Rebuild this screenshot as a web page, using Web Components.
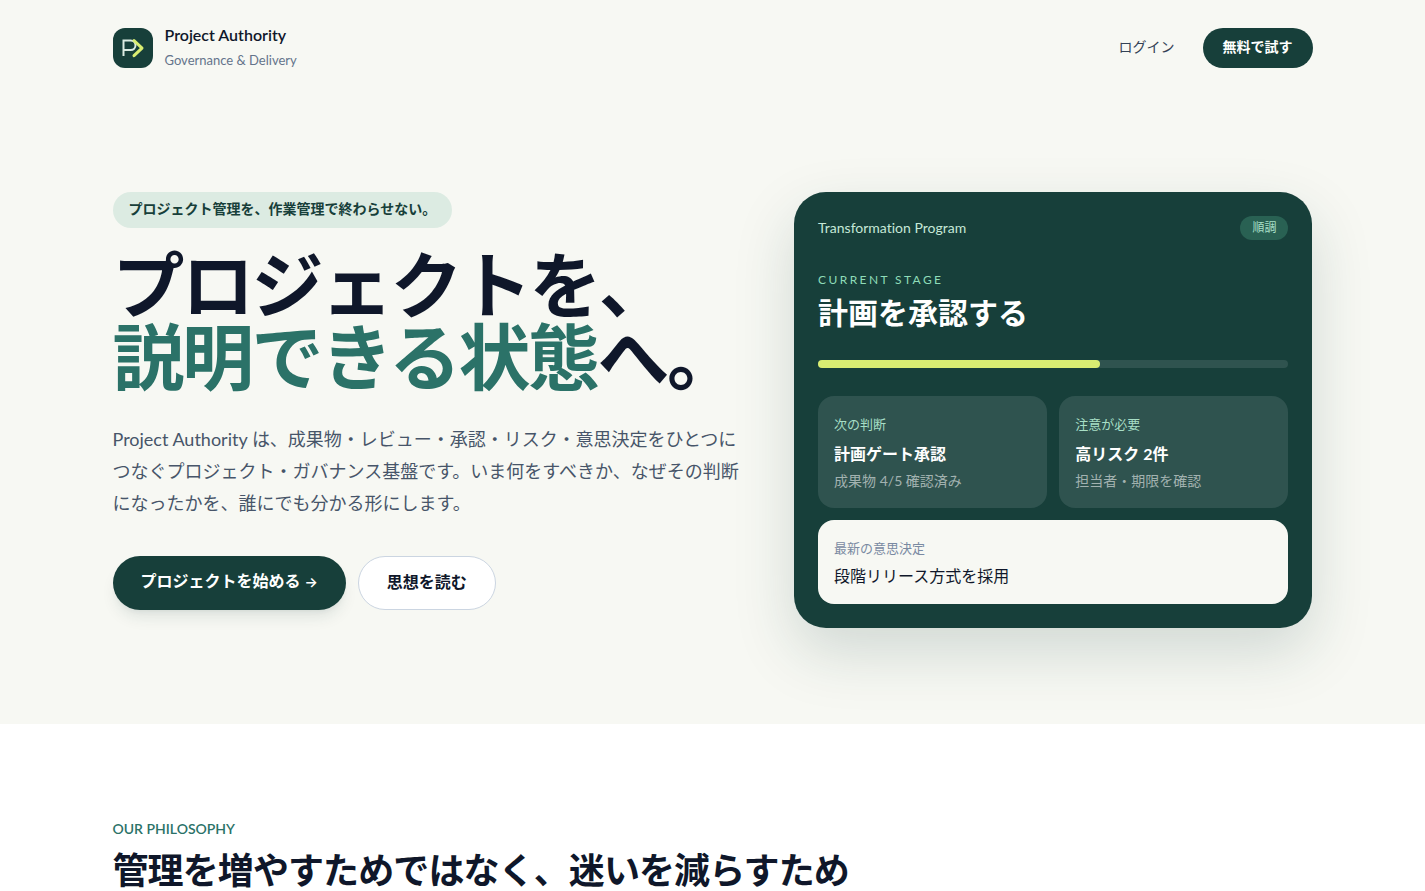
<!DOCTYPE html>
<html lang="ja">
<head>
<meta charset="utf-8">
<meta name="viewport" content="width=device-width, initial-scale=1">
<title>Project Authority</title>
<style>
  body {
    margin: 0;
    background: #fff;
    color: #0f172a;
    font-family: "Lato", "Noto Sans CJK JP", sans-serif;
    font-size: 16px;
    line-height: 24px;
    font-variant-ligatures: none;
  }
</style>
</head>
<body>
<pa-page></pa-page>
<script>
const define = (name, html) => {
  const template = document.createElement('template');
  template.innerHTML = html;
  customElements.define(name, class extends HTMLElement {
    constructor() {
      super();
      this.attachShadow({ mode: 'open' }).append(template.content.cloneNode(true));
    }
  });
};

define('pa-logo', `
  <style>
    :host { display: block; }
    a { display: flex; align-items: center; gap: 12px; color: inherit; text-decoration: none; }
    svg { display: block; width: 40px; height: 40px; flex: none; }
    strong, small { display: block; }
    strong { font-size: 16px; line-height: 24px; font-weight: 600; }
    small { font-size: 13px; line-height: 26px; color: #64748b; }
  </style>
  <a href="#">
    <svg viewBox="0 0 40 40" aria-hidden="true">
      <rect width="40" height="40" rx="12" fill="#173f3a"/>
      <path d="M10.500 28V12.500h7.200a4.800 4.800 0 0 1 0 9.600H10.500" fill="none" stroke="#dcebe2" stroke-width="2"/>
      <path d="M21 12.500l8 7.700-8 7.500" fill="none" stroke="#d9ed72" stroke-width="3" stroke-linecap="round" stroke-linejoin="round"/>
    </svg>
    <span><strong>Project Authority</strong><small>Governance &amp; Delivery</small></span>
  </a>`);

define('pa-header', `
  <style>
    :host { display: flex; justify-content: space-between; align-items: center; height: 96px; }
    nav { display: flex; align-items: center; gap: 28px; font-size: 14px; line-height: 20px; }
    a { color: #334155; text-decoration: none; padding-bottom: 2px; }
    button { font: inherit; font-weight: 700; color: #fff; background: #173f3a; border: 0; border-radius: 20px; padding: 9px 20px 11px; }
  </style>
  <pa-logo></pa-logo>
  <nav><a href="#login">ログイン</a><button type="button">無料で試す</button></nav>`);

define('pa-hero', `
  <style>
    :host { display: grid; grid-template-columns: minmax(0, 11fr) minmax(0, 9fr); gap: 48px; align-items: start; padding: 96px 0; }
    .tag { display: inline-block; background: #dcebe2; color: #173f3a; border-radius: 18px; padding: 7px 16px 9px; font-size: 14px; line-height: 20px; font-weight: 600; vertical-align: top; }
    h1 { margin: 20px 0 0; font-size: 72px; line-height: 72px; font-weight: 600; letter-spacing: -0.035em; }
    em { font-style: normal; color: #2b7268; }
    p { margin: 31px 0 0; font-size: 18px; line-height: 32px; color: #475569; }
    .actions { display: flex; gap: 12px; margin-top: 37px; }
    .arrow { font-family: "Inter", sans-serif; font-size: 14px; line-height: 20px; }
  </style>
  <div>
    <span class="tag">プロジェクト管理を、作業管理で終わらせない。</span>
    <h1>プロジェクトを、<br><em>説明できる状態</em>へ。</h1>
    <p>Project Authority は、成果物・レビュー・承認・リスク・意思決定をひとつにつなぐプロジェクト・ガバナンス基盤です。いま何をすべきか、なぜその判断になったかを、誰にでも分かる形にします。</p>
    <div class="actions">
      <pa-action class="primary">プロジェクトを始める <span class="arrow">→</span></pa-action>
      <pa-action>思想を読む</pa-action>
    </div>
  </div>
  <pa-program></pa-program>`);

define('pa-action', `
  <style>
    :host { display: block; }
    button { font: inherit; font-weight: 600; line-height: 24px; color: #0f172a; background: #fff; border: 1px solid #cbd5e1; border-radius: 27px; padding: 13px 28px 15px; }
    :host(.primary) button { background: #173f3a; color: #fff; border: 0; padding: 13px 28px 17px; box-shadow: 0 10px 15px -3px #173f3a1a, 0 4px 6px -4px #173f3a1a; }
  </style>
  <button type="button"><slot></slot></button>`);

define('pa-tile', `
  <style>
    :host { display: block; box-sizing: border-box; padding: 16px; border-radius: 16px; background: #2f534f; color: #fff; }
    .label { font-size: 13px; line-height: 24px; color: #a7dfc6; }
    .value { font-size: 16px; line-height: 24px; font-weight: 700; margin-top: 6px; }
    .note { font-size: 14px; line-height: 22px; color: #a2b2b0; margin-top: 4px; }
    :host(.light) { background: #f7f8f3; color: #0f172a; }
    :host(.light) .label { color: #7a8aa2; }
    :host(.light) .value { font-weight: 400; margin-top: 4px; }
    :host(.light) .note { display: none; }
  </style>
  <div class="label"><slot name="label"></slot></div>
  <div class="value"><slot></slot></div>
  <div class="note"><slot name="note"></slot></div>`);

define('pa-program', `
  <style>
    :host { display: block; background: #173f3a; border-radius: 32px; padding: 24px; color: #fff; box-shadow: 0 24px 60px #173f3a2b; }
    header { display: flex; justify-content: space-between; align-items: center; font-size: 14px; line-height: 24px; color: #c5e8d7; }
    .state { background: #296153; color: #a7dfc6; border-radius: 12px; padding: 0 12px; font-size: 12px; line-height: 24px; }
    .stage { margin-top: 30px; font-size: 12px; line-height: 20px; letter-spacing: 0.2em; color: #8edcb8; }
    h2 { margin: 4px 0 0; font-size: 30px; line-height: 36px; font-weight: 600; }
    .bar { margin-top: 30px; height: 8px; border-radius: 4px; background: #2f534f; }
    .bar div { width: 60%; height: 8px; border-radius: 4px; background: #d9ed72; }
    .tiles { display: grid; grid-template-columns: 1fr 1fr; gap: 12px; margin-top: 28px; }
    .light { grid-column: 1 / -1; }
  </style>
  <header><span>Transformation Program</span><span class="state">順調</span></header>
  <div class="stage">CURRENT STAGE</div>
  <h2>計画を承認する</h2>
  <div class="bar"><div></div></div>
  <div class="tiles">
    <pa-tile><span slot="label">次の判断</span>計画ゲート承認<span slot="note">成果物 4/5 確認済み</span></pa-tile>
    <pa-tile><span slot="label">注意が必要</span>高リスク 2件<span slot="note">担当者・期限を確認</span></pa-tile>
    <pa-tile class="light"><span slot="label">最新の意思決定</span>段階リリース方式を採用</pa-tile>
  </div>`);

define('pa-philosophy', `
  <style>
    :host { display: block; padding-top: 95px; }
    p { margin: 0; font-size: 14px; line-height: 20px; font-weight: 600; color: #2b7268; }
    h2 { margin: 11px 0 0; font-size: 36px; line-height: 40px; font-weight: 600; letter-spacing: -0.025em; }
  </style>
  <p>OUR PHILOSOPHY</p>
  <h2>管理を増やすためではなく、迷いを減らすため</h2>`);

define('pa-page', `
  <style>
    :host { display: block; }
    .top { background: #f7f8f3; }
    .wrap { max-width: 1200px; margin: 0 auto; }
  </style>
  <div class="top"><div class="wrap"><pa-header></pa-header><pa-hero></pa-hero></div></div>
  <div class="wrap"><pa-philosophy></pa-philosophy></div>`);
</script>
</body>
</html>
